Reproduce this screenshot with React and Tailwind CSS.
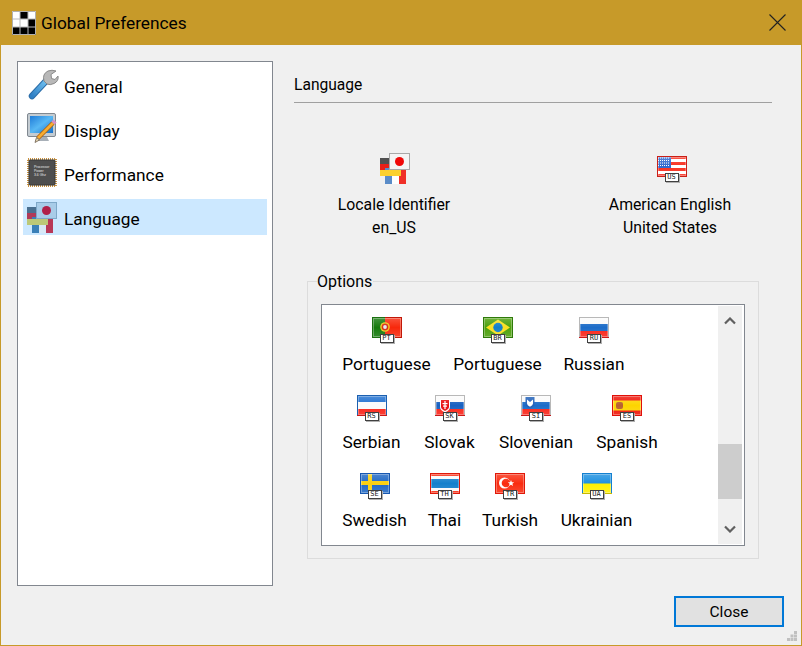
import React from 'react';

const FONT = { fontFamily: 'Roboto, sans-serif' };

const Gloss = ({ id }) => (
   <>
      <defs>
         <linearGradient id={id} x1="0" y1="0" x2="0" y2="1">
            <stop offset="0" stopColor="#fff" stopOpacity="0.22" />
            <stop offset="0.5" stopColor="#fff" stopOpacity="0" />
            <stop offset="1" stopColor="#fff" stopOpacity="0.15" />
         </linearGradient>
      </defs>
      <rect x="0" y="0" width="30" height="21" fill={`url(#${id})`} />
   </>
);

const stripes = (...colors) => {
   const h = 21 / colors.length;
   return colors.map((c, i) => <rect key={i} x="0" y={i * h} width="30" height={h + 0.5} fill={c} />);
};

const FLAGS = {
   PT: {
      edge: '#c01808',
      left: '#1c7010',
      art: (
         <>
            <rect width="30" height="21" fill="#f8280c" />
            <rect width="13" height="21" fill="#157a0c" />
            <circle cx="13" cy="10" r="4.800" fill="#f0d020" />
            <circle cx="13" cy="10" r="3.400" fill="#d83018" />
            <circle cx="13" cy="10" r="1.900" fill="#e8e8f0" />
         </>
      ),
   },
   BR: {
      edge: '#2f7a0a',
      art: (
         <>
            <rect width="30" height="21" fill="#4ca00c" />
            <polygon points="15,2.500 27,10.500 15,18.500 3,10.500" fill="#fae020" />
            <circle cx="15" cy="10.500" r="4.700" fill="#1480c8" />
         </>
      ),
   },
   RU: { edge: '#b8b8b8', bottom: '#c81818', art: stripes('#fafafa', '#1c6cc8', '#fa2418') },
   RS: { edge: '#1c60b0', bottom: '#c81818', art: stripes('#2070d0', '#fafafa', '#fa2418') },
   SK: {
      edge: '#b8b8b8',
      bottom: '#c81818',
      art: (
         <>
            {stripes('#fafafa', '#1860c0', '#fa2418')}
            <path d="M5 4h10v8q0 3-5 5.500q-5-2.500-5-5.500z" fill="#fff" />
            <path d="M6 5h8v7q0 2-4 4q-4-2-4-4z" fill="#e81010" />
            <rect x="9.400" y="6" width="1.200" height="8" fill="#fff" />
            <rect x="7.500" y="8" width="5" height="1.200" fill="#fff" />
            <rect x="8" y="10.500" width="4" height="1.200" fill="#fff" />
         </>
      ),
   },
   SI: {
      edge: '#b8b8b8',
      bottom: '#c81818',
      art: (
         <>
            {stripes('#fafafa', '#1c6cc8', '#fa2418')}
            <path d="M4.500 2h9v6.500q0 3-4.500 5q-4.500-2-4.500-5z" fill="#2060b8" />
            <path d="M6 4.500l3 2.500l3-2.500v4q0 2-3 3.300q-3-1.300-3-3.300z" fill="#fff" />
         </>
      ),
   },
   ES: {
      edge: '#e01008',
      art: (
         <>
            <rect width="30" height="21" fill="#f01408" />
            <rect y="5.500" width="30" height="10" fill="#fdd400" />
            <rect x="4" y="7" width="7" height="7" rx="2" fill="#b86030" />
         </>
      ),
   },
   SE: {
      edge: '#1858b0',
      art: (
         <>
            <rect width="30" height="21" fill="#2068c4" />
            <rect x="8" width="4" height="21" fill="#fad010" />
            <rect y="8" width="30" height="4" fill="#fad010" />
         </>
      ),
   },
   TH: {
      edge: '#e01808',
      art: (
         <>
            <rect width="30" height="21" fill="#f8280c" />
            <rect y="3" width="30" height="15" fill="#fafafa" />
            <rect y="6" width="30" height="9" fill="#1480cc" />
         </>
      ),
   },
   TR: {
      edge: '#e01808',
      art: (
         <>
            <rect width="30" height="21" fill="#fa2c10" />
            <circle cx="9.500" cy="10" r="5.500" fill="#fff" />
            <circle cx="11" cy="10" r="4.300" fill="#fa2c10" />
            <polygon points="16,7 16.900,9.200 19.200,9.200 17.400,10.700 18,13 16,11.700 14,13 14.600,10.700 12.800,9.200 15.100,9.200" fill="#fff" />
         </>
      ),
   },
   UA: { edge: '#1480d0', bottom: '#c8b800', art: stripes('#1c90e0', '#fdf000') },
   US: {
      edge: '#c82018',
      art: (
         <>
            {stripes('#f83020', '#fff', '#f83020', '#fff', '#f83020', '#fff', '#f83020')}
            <rect width="14" height="12" fill="#3068d0" />
            <path d="M1 2h12M1 4.500h12M1 7h12M1 9.500h12" stroke="#fff" strokeWidth="1" strokeDasharray="1 1" />
         </>
      ),
   },
};

const Flag = ({ code }) => {
   const flag = FLAGS[code];
   return (
      <div className="relative w-[30px] h-[26px]">
         <svg width="30" height="21" viewBox="0 0 30 21" className="block">
            {flag.art}
            <Gloss id={`gloss-${code}`} />
            <rect x="1.500" y="1.500" width="27" height="18" fill="none" stroke="#fff" strokeOpacity="0.3" />
            <rect x="0.500" y="0.500" width="29" height="20" fill="none" stroke={flag.edge} />
            {flag.left && <path d="M0.500 0v21M0 0.500h13M0 20.500h13" stroke={flag.left} fill="none" />}
            {flag.bottom && <path d="M0 20.500h30" stroke={flag.bottom} />}
         </svg>
         <div
            className="absolute left-[8px] top-[17px] w-[14px] h-[9px] bg-white border border-[#404040] shadow-[1px_1px_0_#b0b0b0] flex items-center justify-center text-[7px] leading-none text-[#202020]"
            style={{ fontFamily: '"DejaVu Sans Mono", monospace' }}
         >
            {code}
         </div>
      </div>
   );
};

const WrenchIcon = () => (
   <svg width="32" height="32" viewBox="0 0 32 32" className="block">
      <defs>
         <linearGradient id="wr" x1="0" y1="1" x2="1" y2="0">
            <stop offset="0" stopColor="#2f7fc4" />
            <stop offset="1" stopColor="#6fc0f0" />
         </linearGradient>
      </defs>
      <path d="M5 27L19 12" stroke="#2a6ca8" strokeWidth="6.500" strokeLinecap="round" />
      <path d="M5 27L19 12" stroke="url(#wr)" strokeWidth="4.500" strokeLinecap="round" />
      <path d="M17 12Q15 5 21 2Q25 0.500 29 2L24 5.500L24.500 9.500L28 10.500L31 7Q32 12 27 14.500Q23 16.500 20 15Z" fill="#b8b8b8" stroke="#8a8a8a" />
   </svg>
);

const DisplayIcon = () => (
   <svg width="32" height="32" viewBox="0 0 32 32" className="block">
      <defs>
         <linearGradient id="scr" x1="0" y1="0" x2="1" y2="1">
            <stop offset="0" stopColor="#1f7cd8" />
            <stop offset="0.5" stopColor="#58b8f4" />
            <stop offset="1" stopColor="#1870c8" />
         </linearGradient>
      </defs>
      <path d="M10 24h10l2 4H8z" fill="#a8b0b8" />
      <rect x="0.500" y="0.500" width="28" height="23" rx="1.500" fill="#c4ccd2" stroke="#808890" />
      <rect x="3" y="3" width="23" height="17" fill="url(#scr)" />
      <path d="M11 25L26 10" stroke="#a86010" strokeWidth="4.500" />
      <path d="M11 25L26 10" stroke="#f8ac30" strokeWidth="2.800" />
      <path d="M26 10L28 8" stroke="#d890c8" strokeWidth="4.500" />
      <path d="M12.500 27L8 29.500L9.500 24.500z" fill="#e8d8b0" stroke="#605040" strokeWidth="0.700" />
   </svg>
);

const ChipIcon = () => (
   <svg width="32" height="32" viewBox="0 0 32 32" className="block">
      <rect x="1" y="2" width="28" height="27" fill="none" stroke="#c8903c" strokeWidth="2" strokeDasharray="1 1" />
      <rect x="2" y="3" width="26" height="25" rx="1" fill="#4e4e4e" stroke="#383838" />
      <text x="7" y="11" fontSize="3.400" fill="#e8e8e8" fontFamily="Liberation Sans, sans-serif">Processor</text>
      <text x="7" y="15" fontSize="3.400" fill="#e8e8e8" fontFamily="Liberation Sans, sans-serif">Power</text>
      <text x="7" y="19" fontSize="3.400" fill="#e8e8e8" fontFamily="Liberation Sans, sans-serif">3.6 Ghz</text>
   </svg>
);

const LocaleIcon = ({ muted }) => {
   const c = muted
      ? { top: '#4a7090', mid: '#b03a58', low: '#bcc878', blue: '#3a80b8', white: '#d8e8f6', red: '#b83858', jp: '#a8cce8', dot: '#b02048', edge: '#7ea8c8' }
      : { top: '#505050', mid: '#e82018', low: '#fbd030', blue: '#5a8cc8', white: '#ffffff', red: '#f03028', jp: '#f4f4f4', dot: '#f00808', edge: '#a8a8a8' };
   return (
      <svg width="30" height="31" viewBox="0 0 30 31" className="block">
         <rect y="5" width="21" height="6" fill={c.top} />
         <rect y="11" width="21" height="6" fill={c.mid} />
         <rect x="5" y="15" width="7" height="16" fill={c.blue} />
         <rect x="12" y="15" width="7" height="16" fill={c.white} />
         <rect x="19" y="15" width="7" height="16" fill={c.red} />
         <rect y="17" width="21" height="6" fill={c.low} />
         <rect x="9.500" y="0.500" width="20" height="16" fill={c.jp} stroke={c.edge} />
         <circle cx="19.500" cy="8.500" r="4.500" fill={c.dot} />
      </svg>
   );
};

const NAV = [
   { label: 'General', icon: <WrenchIcon /> },
   { label: 'Display', icon: <DisplayIcon /> },
   { label: 'Performance', icon: <ChipIcon /> },
   { label: 'Language', icon: <LocaleIcon muted />, active: true },
];

const ROWS = [
   [['Portuguese', 'PT', 89], ['Portuguese', 'BR', 89], ['Russian', 'RU', 60]],
   [['Serbian', 'RS', 59], ['Slovak', 'SK', 53], ['Slovenian', 'SI', 76], ['Spanish', 'ES', 62]],
   [['Swedish', 'SE', 65], ['Thai', 'TH', 31], ['Turkish', 'TR', 56], ['Ukrainian', 'UA', 73]],
];

const Chevron = ({ down }) => (
   <svg width="12" height="8" viewBox="0 0 12 8" className="block">
      <path d={down ? 'M1 1.500l5 5l5-5' : 'M1 6.500l5-5l5 5'} fill="none" stroke="#606060" strokeWidth="2.200" />
   </svg>
);

export default function App() {
   return (
      <div className="w-[802px] h-[646px] relative flex flex-col bg-[#f0f0f0] border-x border-b border-[#c79a29] text-black" style={FONT}>
         <div className="h-[45px] -mx-px bg-[#c79a29] flex items-center pl-[12px] pr-[16px] shrink-0">
            <svg width="24" height="24" viewBox="0 0 24 24" className="block">
               <rect width="24" height="24" fill="#fff" />
               <rect x="8" y="0" width="8" height="8" fill="#000" />
               <rect x="16" y="8" width="8" height="8" fill="#000" />
               <rect x="0" y="16" width="24" height="8" fill="#000" />
               <path d="M8 0v24M16 0v24M0 8h24M0 16h24" stroke="#b8b8b8" strokeWidth="1" />
               <path d="M0.500 0.500h23v23h-23z" fill="none" stroke="#b0b0b0" />
            </svg>
            <span className="ml-[5px] text-[17.3px] leading-[24px]">Global Preferences</span>
            <svg width="17" height="17" viewBox="0 0 17 17" className="block ml-auto">
               <path d="M0.500 0.500l16 16M16.500 0.500l-16 16" stroke="#222" strokeWidth="1.100" fill="none" />
            </svg>
         </div>

         <div className="flex pl-[16px] pt-[16px] flex-1">
            <div className="w-[256px] h-[525px] bg-white border border-[#82878f] pt-[5px] px-[5px] flex flex-col gap-[8px] shrink-0">
               {NAV.map(item => (
                  <div key={item.label} className={`h-[36px] flex items-center ${item.active ? 'bg-[#cce8ff]' : ''}`}>
                     <div className="w-[32px] ml-[4px] flex justify-start">{item.icon}</div>
                     <span className="ml-[5px] pt-[4px] text-[17.25px] leading-[24px]">{item.label}</span>
                  </div>
               ))}
            </div>

            <div className="ml-[21px] w-[478px]">
               <div className="border-b border-[#a0a0a0] pt-[12px] pb-[5px] text-[15.6px] leading-[24px]">Language</div>

               <div className="mt-[50px] flex justify-between pr-[2px] text-[15.8px] leading-[23px] text-center">
                  <div className="w-[200px] flex flex-col items-center">
                     <div className="h-[31px] flex items-center pl-[2px]"><LocaleIcon /></div>
                     <div className="mt-[9px]">Locale Identifier</div>
                     <div>en_US</div>
                  </div>
                  <div className="w-[200px] flex flex-col items-center">
                     <div className="h-[31px] flex items-center pl-[3px]"><Flag code="US" /></div>
                     <div className="mt-[9px]">American English</div>
                     <div>United States</div>
                  </div>
               </div>

               <div className="relative mt-[42px] ml-[13px] w-[452px] h-[278px] border border-[#dcdcdc] pt-[22px] pl-[13px]">
                  <div className="absolute left-[9px] top-[-12px] bg-[#f0f0f0] text-[16px] leading-[24px] pr-[1px]">Options</div>
                  <div className="w-[424px] h-[242px] bg-white border border-[#82878f] flex">
                     <div className="flex-1 pl-[20px] pt-[12px] flex flex-col gap-[19px]">
                        {ROWS.map((row, i) => (
                           <div key={i} className="flex gap-[22px]">
                              {row.map(([label, code, width]) => (
                                 <div key={code} className="flex flex-col items-center" style={{ width }}>
                                    <Flag code={code} />
                                    <span className="mt-[9px] text-[17.25px] leading-[24px] whitespace-nowrap">{label}</span>
                                 </div>
                              ))}
                           </div>
                        ))}
                     </div>
                     <div className="w-[24px] mr-[2px] my-px bg-[#f0f0f0] flex flex-col">
                        <div className="h-[28px] flex items-center justify-center pt-[2px]"><Chevron /></div>
                        <div className="mt-[110px] h-[55px] bg-[#cdcdcd]" />
                        <div className="mt-auto h-[28px] flex items-center justify-center pb-[2px]"><Chevron down /></div>
                     </div>
                  </div>
               </div>
            </div>
         </div>

         <div className="flex justify-end pr-[17px] pb-[18px] shrink-0">
            <button className="w-[110px] h-[31px] bg-[#e1e1e1] border-2 border-[#0078d7] pt-[2px] text-[15.5px] leading-none" style={FONT}>Close</button>
         </div>

         <svg width="11" height="11" viewBox="0 0 11 11" className="absolute right-[3px] bottom-[3px]">
            <path d="M7 0h3v3H7zM3.500 3.500h3v3h-3zM7 3.500h3v3H7zM0 7h3v3H0zM3.500 7h3v3h-3zM7 7h3v3H7z" fill="#c0c0c0" />
         </svg>
      </div>
   );
}
